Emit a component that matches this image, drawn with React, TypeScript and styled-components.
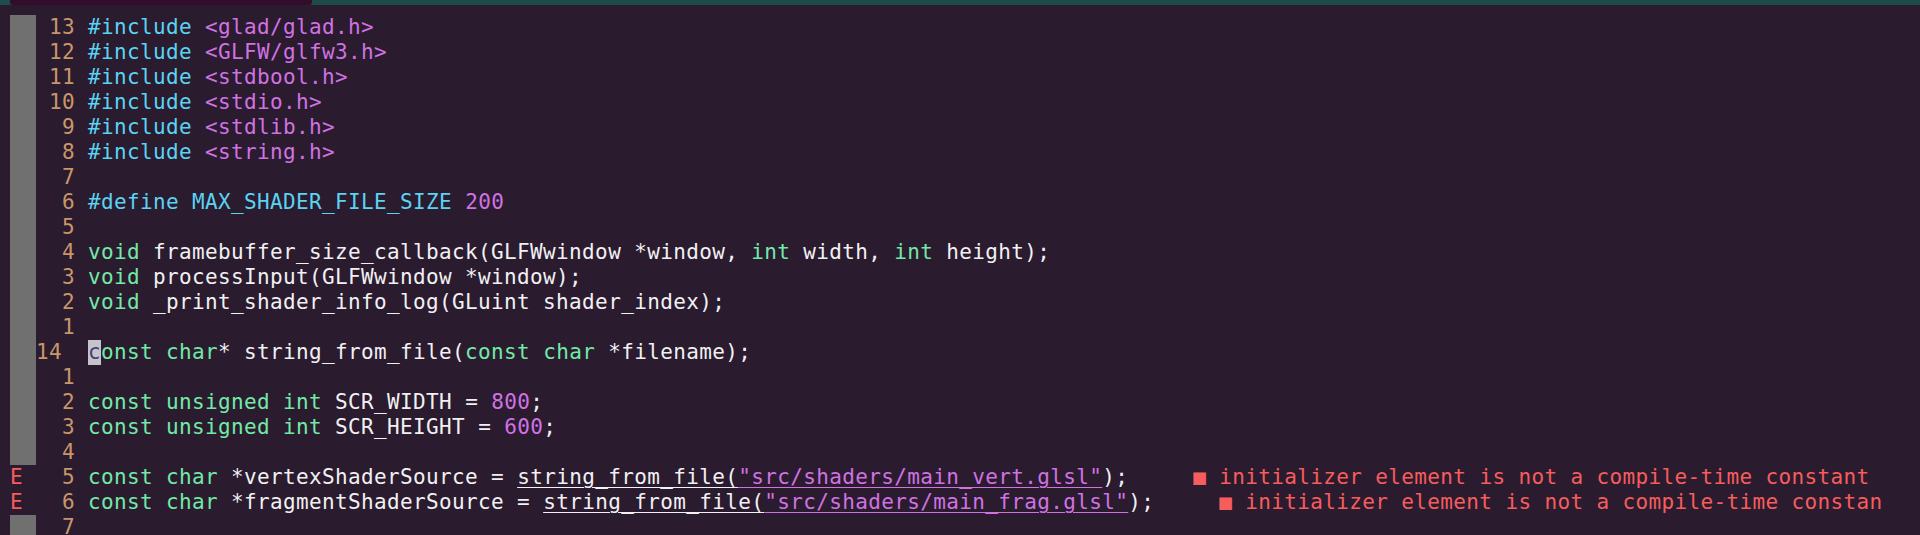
import React from "react";
import styled, { createGlobalStyle } from "styled-components";

const GlobalStyle = createGlobalStyle`
  html, body {
    margin: 0;
    padding: 0;
    background: #2a1b2f;
    overflow: hidden;
  }
`;

const C = {
  bg: "#2a1b2f",
  num: "#c9966b",
  cyan: "#5bd3f2",
  magenta: "#d072e2",
  green: "#72e9a6",
  white: "#f1f0f2",
  red: "#f65d5c",
  grey: "#707070",
};

const Screen = styled.div`
  width: 1920px;
  height: 535px;
  background: ${C.bg};
  display: flex;
  flex-direction: column;
  overflow: hidden;
  font-family: "DejaVu Sans Mono", "Liberation Mono", monospace;
  font-size: 21px;
  letter-spacing: 0.36px;
  line-height: 25px;
`;

const TabStrip = styled.div`
  display: flex;
  height: 5px;
  background: #1d4a4a;
  flex: none;
`;

const TabEdge = styled.div`
  width: 10px;
  background: #1f4d4d;
  border-bottom-right-radius: 5px;
`;

const ActiveTab = styled.div`
  width: 302px;
  background: #330d2b;
  border-bottom-right-radius: 3px;
  border-bottom-left-radius: 3px;
`;

const Editor = styled.div`
  display: flex;
  flex-direction: column;
  padding: 10px 0 0 10px;
`;

const Row = styled.div`
  display: flex;
  height: 25px;
  white-space: pre;
`;

const Sign = styled.div<{ $kind: "bar" | "error" | "none" }>`
  width: 26px;
  flex: none;
  background: ${(p) => (p.$kind === "bar" ? C.grey : "transparent")};
  color: ${C.red};
`;

const LineNr = styled.div<{ $current?: boolean }>`
  width: 52px;
  flex: none;
  box-sizing: border-box;
  color: ${C.num};
  text-align: ${(p) => (p.$current ? "left" : "right")};
  padding-right: ${(p) => (p.$current ? "0" : "13px")};
`;

const Code = styled.div`
  flex: none;
  color: ${C.white};
`;

const Tok = styled.span<{ $c: string; $u?: boolean }>`
  color: ${(p) => p.$c};
  text-decoration: ${(p) => (p.$u ? "underline" : "none")};
  text-decoration-color: ${(p) => p.$c};
  text-decoration-thickness: 1px;
  text-underline-offset: 3px;
`;

const Cursor = styled.span`
  display: inline-block;
  width: 13px;
  height: 25px;
  vertical-align: top;
  background: #c5c4cc;
  color: #4b3d72;
`;

const Diag = styled.span`
  color: ${C.red};
`;

type Seg = { t: string; c?: string; u?: boolean };
type Line = {
  sign: "bar" | "error" | "none";
  n: string;
  current?: boolean;
  cursor?: string;
  segs: Seg[];
  diag?: string;
};

const inc = (path: string): Seg[] => [
  { t: "#include", c: C.cyan },
  { t: " " },
  { t: path, c: C.magenta },
];

const lines: Line[] = [
  { sign: "bar", n: "13", segs: inc("<glad/glad.h>") },
  { sign: "bar", n: "12", segs: inc("<GLFW/glfw3.h>") },
  { sign: "bar", n: "11", segs: inc("<stdbool.h>") },
  { sign: "bar", n: "10", segs: inc("<stdio.h>") },
  { sign: "bar", n: "9", segs: inc("<stdlib.h>") },
  { sign: "bar", n: "8", segs: inc("<string.h>") },
  { sign: "bar", n: "7", segs: [] },
  {
    sign: "bar",
    n: "6",
    segs: [
      { t: "#define", c: C.cyan },
      { t: " " },
      { t: "MAX_SHADER_FILE_SIZE", c: C.cyan },
      { t: " " },
      { t: "200", c: C.magenta },
    ],
  },
  { sign: "bar", n: "5", segs: [] },
  {
    sign: "bar",
    n: "4",
    segs: [
      { t: "void", c: C.green },
      { t: " framebuffer_size_callback(GLFWwindow *window, " },
      { t: "int", c: C.green },
      { t: " width, " },
      { t: "int", c: C.green },
      { t: " height);" },
    ],
  },
  {
    sign: "bar",
    n: "3",
    segs: [{ t: "void", c: C.green }, { t: " processInput(GLFWwindow *window);" }],
  },
  {
    sign: "bar",
    n: "2",
    segs: [{ t: "void", c: C.green }, { t: " _print_shader_info_log(GLuint shader_index);" }],
  },
  { sign: "bar", n: "1", segs: [] },
  {
    sign: "bar",
    n: "14",
    current: true,
    cursor: "c",
    segs: [
      { t: "onst", c: C.green },
      { t: " " },
      { t: "char", c: C.green },
      { t: "* string_from_file(" },
      { t: "const", c: C.green },
      { t: " " },
      { t: "char", c: C.green },
      { t: " *filename);" },
    ],
  },
  { sign: "bar", n: "1", segs: [] },
  {
    sign: "bar",
    n: "2",
    segs: [
      { t: "const", c: C.green },
      { t: " " },
      { t: "unsigned", c: C.green },
      { t: " " },
      { t: "int", c: C.green },
      { t: " SCR_WIDTH = " },
      { t: "800", c: C.magenta },
      { t: ";" },
    ],
  },
  {
    sign: "bar",
    n: "3",
    segs: [
      { t: "const", c: C.green },
      { t: " " },
      { t: "unsigned", c: C.green },
      { t: " " },
      { t: "int", c: C.green },
      { t: " SCR_HEIGHT = " },
      { t: "600", c: C.magenta },
      { t: ";" },
    ],
  },
  { sign: "bar", n: "4", segs: [] },
  {
    sign: "error",
    n: "5",
    segs: [
      { t: "const", c: C.green },
      { t: " " },
      { t: "char", c: C.green },
      { t: " *vertexShaderSource = " },
      { t: "string_from_file(", u: true },
      { t: '"src/shaders/main_vert.glsl"', c: C.magenta, u: true },
      { t: ");" },
    ],
    diag: "     ■ initializer element is not a compile-time constant",
  },
  {
    sign: "error",
    n: "6",
    segs: [
      { t: "const", c: C.green },
      { t: " " },
      { t: "char", c: C.green },
      { t: " *fragmentShaderSource = " },
      { t: "string_from_file(", u: true },
      { t: '"src/shaders/main_frag.glsl"', c: C.magenta, u: true },
      { t: ");" },
    ],
    diag: "     ■ initializer element is not a compile-time constan",
  },
  { sign: "bar", n: "7", segs: [] },
];

export default function App() {
  return (
    <>
      <GlobalStyle />
      <Screen>
        <TabStrip>
          <TabEdge />
          <ActiveTab />
        </TabStrip>
        <Editor>
          {lines.map((l, i) => (
            <Row key={i}>
              <Sign $kind={l.sign}>{l.sign === "error" ? "E" : ""}</Sign>
              <LineNr $current={l.current}>{l.n}</LineNr>
              <Code>
                {l.cursor && <Cursor>{l.cursor}</Cursor>}
                {l.segs.map((s, j) => (
                  <Tok key={j} $c={s.c ?? C.white} $u={s.u}>
                    {s.t}
                  </Tok>
                ))}
                {l.diag && <Diag>{l.diag}</Diag>}
              </Code>
            </Row>
          ))}
        </Editor>
      </Screen>
    </>
  );
}
